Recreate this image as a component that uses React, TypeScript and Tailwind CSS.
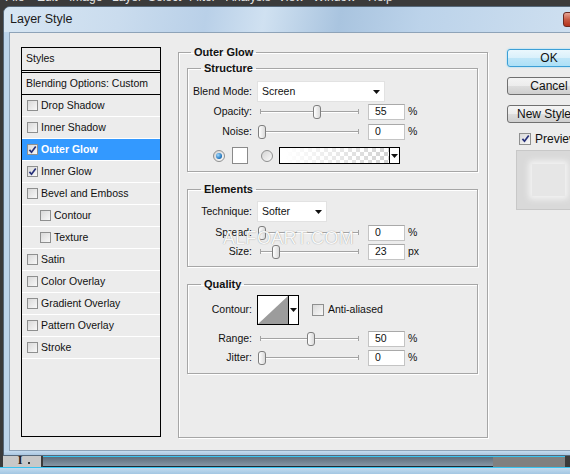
import React from "react";

function Box({ on, big }: { on?: boolean; big?: boolean }) {
  return (
    <span
      className={`flex shrink-0 items-center justify-center border border-[#8e8f8f] bg-[linear-gradient(135deg,#d9d9d9,#f8f8f8)] ${
        big ? "h-[12px] w-[12px]" : "h-[11px] w-[11px]"
      }`}
    >
      {on && (
        <svg viewBox="0 0 10 10" className="h-[9px] w-[9px]">
          <path d="M1.6 5.4 L3.9 8 L8.6 1.6" fill="none" stroke="#26307a" strokeWidth="1.9" />
        </svg>
      )}
    </span>
  );
}

function Radio({ on }: { on?: boolean }) {
  return (
    <span className="flex h-[12px] w-[12px] shrink-0 items-center justify-center rounded-full border border-[#8e8f8f] bg-[linear-gradient(135deg,#d4d4d4,#fafafa)]">
      {on && (
        <span className="h-[6px] w-[6px] rounded-full bg-[radial-gradient(circle_at_35%_35%,#9fd9ff,#1b6fb8_70%,#0d3f73)]" />
      )}
    </span>
  );
}

function LayerRow({ label, on, sel, indent }: { label: string; on?: boolean; sel?: boolean; indent?: boolean }) {
  return (
    <div
      className={`flex h-[22px] shrink-0 items-center border-b border-white ${
        sel ? "bg-[#3399ff] font-bold text-white" : ""
      } ${indent ? "pl-[18px]" : "pl-[5px]"}`}
    >
      <Box on={on} />
      <span className="ml-[3px]">{label}</span>
    </div>
  );
}

function Label({ children }: { children: React.ReactNode }) {
  return <span className="w-[64px] shrink-0 text-right">{children}</span>;
}

function Slider({ pos }: { pos: number }) {
  return (
    <div className="relative ml-[5px] h-[16px] w-[104px] shrink-0">
      <div className="absolute left-[4px] right-[2px] top-[7px] h-[2px] border-t border-b border-t-[#a3a3a3] border-b-white" />
      <div className="absolute left-[3px] top-[5px] h-[5px] w-[1px] bg-[#a3a3a3]" />
      <div className="absolute right-[2px] top-[5px] h-[5px] w-[1px] bg-[#a3a3a3]" />
      <div
        className="absolute top-[1px] h-[14px] w-[8px] rounded-[3px] border border-[#7f7f7f] bg-[linear-gradient(90deg,#ffffff,#dadada)]"
        style={{ left: pos }}
      />
    </div>
  );
}

function SliderRow({ label, pos, value, unit }: { label: string; pos: number; value: string; unit: string }) {
  return (
    <div className="flex h-[16px] items-center">
      <Label>{label}</Label>
      <Slider pos={pos} />
      <div className="ml-[7px] flex h-[16px] w-[37px] items-center border border-[#c4c4c4] border-t-[#a9a9a9] bg-white pl-[6px]">
        {value}
      </div>
      <span className="ml-[3px]">{unit}</span>
    </div>
  );
}

function Arrow() {
  return (
    <svg viewBox="0 0 7 4" className="h-[4px] w-[7px]">
      <path d="M0 0 H7 L3.5 4 Z" fill="#111" />
    </svg>
  );
}

function Select({ value, w }: { value: string; w: string }) {
  return (
    <div className={`ml-[5px] flex h-[21px] items-center justify-between border border-[#e2e2e2] bg-white pl-[4px] pr-[4px] ${w}`}>
      <span>{value}</span>
      <Arrow />
    </div>
  );
}

function Group({ title, children, className }: { title: string; children: React.ReactNode; className?: string }) {
  return (
    <fieldset
      className={`relative flex flex-col border border-[#a6a6a6] shadow-[inset_1px_1px_0_#ffffff,1px_1px_0_#ffffff] ${className ?? ""}`}
    >
      <legend className="ml-[13px] px-[3px] text-[11px] font-bold leading-[14px]">{title}</legend>
      {children}
    </fieldset>
  );
}

function Btn({ children, def }: { children: React.ReactNode; def?: boolean }) {
  return (
    <div
      className={`flex h-[18px] w-[84px] shrink-0 items-center justify-center rounded-[3px] border text-[12px] ${
        def
          ? "border-[#3c9fd6] bg-[linear-gradient(#eaf7fd_0%,#d9f0fb_50%,#bfe6f8_51%,#ace0f7_100%)] shadow-[0_0_2px_#7fd5fa]"
          : "border-[#707070] bg-[linear-gradient(#f4f4f4_0%,#ececec_50%,#dddddd_51%,#cfcfcf_100%)]"
      }`}
    >
      {children}
    </div>
  );
}

const menu: [string, string][] = [
  ["File", "w-[32px]"],
  ["Edit", "w-[32px]"],
  ["Image", "w-[43px]"],
  ["Layer", "w-[36px]"],
  ["Select", "w-[41px]"],
  ["Filter", "w-[37px]"],
  ["Analysis", "w-[52px]"],
  ["View", "w-[35px]"],
  ["Window", "w-[55px]"],
  ["Help", "w-[40px]"],
];

export default function App() {
  return (
    <div className="flex h-[474px] w-[570px] flex-col overflow-hidden bg-[#3b3b3b] font-['Liberation_Sans',Arial,sans-serif] text-[10.5px] text-[#111]">
      <div className="flex h-[6px] shrink-0 overflow-hidden pl-[5px]">
        {menu.map(([m, w]) => (
          <span key={m} className={`-mt-[9px] shrink-0 overflow-hidden text-[12px] leading-[12px] text-[#e6e6e6] ${w}`}>
            {m}
          </span>
        ))}
      </div>

      <div className="ml-[3px] flex h-[450px] w-[580px] shrink-0 flex-col rounded-t-[7px] border border-[#56687a] bg-[#bdd5eb]">
        <div className="flex h-[25px] shrink-0 items-center rounded-t-[6px] bg-[linear-gradient(100deg,#d7e6f3_0%,#cadcee_20%,#b9d0e8_35%,#d0e1f1_45%,#a9c4df_58%,#bcd3ea_72%,#cfe0f0_100%)] pl-[6px]">
          <span className="text-[12.5px] text-[#1b1b1b]">Layer Style</span>
          <div className="ml-auto mr-[5px] h-[15px] w-[14px] rounded-[3px] border border-[#6b2a22] bg-[linear-gradient(#e7a595,#c85a43_50%,#b3331c)]" />
        </div>

        <div className="ml-[5px] flex h-[419px] shrink-0 items-start border border-[#8ea3b8] bg-[#ececec] pl-[11px]">
          <div className="mt-[14px] flex h-[390px] w-[140px] shrink-0 flex-col border border-black">
            <div className="flex h-[23px] shrink-0 items-center border-b border-black pl-[4px]">Styles</div>
            <div className="mt-[1px] flex h-[23px] shrink-0 items-center border-t border-b border-black pl-[4px]">
              Blending Options: Custom
            </div>
            <LayerRow label="Drop Shadow" />
            <LayerRow label="Inner Shadow" />
            <LayerRow label="Outer Glow" on sel />
            <LayerRow label="Inner Glow" on />
            <LayerRow label="Bevel and Emboss" />
            <LayerRow label="Contour" indent />
            <LayerRow label="Texture" indent />
            <LayerRow label="Satin" />
            <LayerRow label="Color Overlay" />
            <LayerRow label="Gradient Overlay" />
            <LayerRow label="Pattern Overlay" />
            <LayerRow label="Stroke" />
          </div>

          <div className="ml-[17px] mt-[12px] shrink-0">
            <fieldset className="flex h-[393px] w-[310px] flex-col border border-[#a6a6a6] shadow-[inset_1px_1px_0_#ffffff,1px_1px_0_#ffffff]">
              <legend className="ml-[12px] px-[3px] text-[11px] font-bold leading-[14px]">Outer Glow</legend>

              <Group title="Structure" className="ml-[8px] mt-[2px] w-[291px] pb-[7px]">
                <div className="mt-[6px] flex h-[21px] items-center">
                  <Label>Blend Mode:</Label>
                  <Select value="Screen" w="w-[128px]" />
                </div>
                <div className="mt-[2px]">
                  <SliderRow label="Opacity:" pos={56} value="55" unit="%" />
                </div>
                <div className="mt-[4px]">
                  <SliderRow label="Noise:" pos={1} value="0" unit="%" />
                </div>
                <div className="mt-[7px] flex h-[17px] items-center">
                  <span className="ml-[25px]">
                    <Radio on />
                  </span>
                  <div className="ml-[7px] h-[17px] w-[16px] border border-[#8a8a8a] bg-white" />
                  <span className="ml-[13px]">
                    <Radio />
                  </span>
                  <div className="ml-[6px] flex h-[17px] w-[121px] border border-black">
                    <div className="flex-1 bg-[linear-gradient(to_right,#ffffff_5%,rgba(255,255,255,0)),repeating-conic-gradient(#d2d2d2_0_25%,#ffffff_0_50%)] bg-[length:100%_100%,8px_8px]" />
                    <div className="flex w-[10px] items-center justify-center border-l border-black bg-white">
                      <Arrow />
                    </div>
                  </div>
                </div>
              </Group>

              <Group title="Elements" className="ml-[8px] mt-[10px] w-[291px] pb-[6px]">
                <div className="mt-[5px] flex h-[21px] items-center">
                  <Label>Technique:</Label>
                  <Select value="Softer" w="w-[70px]" />
                </div>
                <div className="mt-[3px]">
                  <SliderRow label="Spread:" pos={1} value="0" unit="%" />
                </div>
                <div className="mt-[3px]">
                  <SliderRow label="Size:" pos={15} value="23" unit="px" />
                </div>
                <span className="pointer-events-none absolute left-[35px] top-[33px] text-[18px] leading-[18px] tracking-[0.3px] text-[#f7f7f7] [text-shadow:0_0_1px_#8c8c8c]">
                  ALFOART.COM
                </span>
              </Group>

              <Group title="Quality" className="ml-[8px] mt-[10px] w-[291px] pb-[7px]">
                <div className="mt-[4px] flex h-[30px] items-center">
                  <Label>Contour:</Label>
                  <div className="ml-[5px] flex h-[30px] w-[42px] border border-black bg-white">
                    <svg viewBox="0 0 30 28" className="h-[28px] w-[30px]" preserveAspectRatio="none">
                      <path d="M0 28 L30 0 L30 28 Z" fill="#9c9c9c" />
                    </svg>
                    <div className="flex flex-1 items-center justify-center border-l border-black">
                      <Arrow />
                    </div>
                  </div>
                  <span className="ml-[13px]">
                    <Box big />
                  </span>
                  <span className="ml-[4px]">Anti-aliased</span>
                </div>
                <div className="mt-[6px]">
                  <SliderRow label="Range:" pos={50} value="50" unit="%" />
                </div>
                <div className="mt-[3px]">
                  <SliderRow label="Jitter:" pos={1} value="0" unit="%" />
                </div>
              </Group>
            </fieldset>
          </div>

          <div className="ml-[19px] mt-[16px] flex shrink-0 flex-col">
            <Btn def>OK</Btn>
            <div className="mt-[10px]">
              <Btn>Cancel</Btn>
            </div>
            <div className="mt-[10px]">
              <Btn>New Style...</Btn>
            </div>
            <div className="ml-[12px] mt-[9px] flex h-[13px] items-center">
              <Box on big />
              <span className="ml-[4px] text-[12px]">Preview</span>
            </div>
            <div className="ml-[9px] mt-[5px] flex h-[60px] w-[62px] items-center border border-[#c8c8c8] bg-[#d9d9d9] pl-[15px]">
              <div className="h-[32px] w-[33px] bg-[#e6e6e6] shadow-[0_0_6px_3px_#f4f4f4]" />
            </div>
          </div>
        </div>

        <div className="h-[4px] shrink-0 bg-[linear-gradient(#c6dcef,#a9c6e0)]" />
      </div>

      <div className="flex h-[11px] shrink-0">
        <div className="ml-[3px] flex w-[38px] items-start justify-center bg-[#c8c8c8] pl-[4px]">
          <span className="-mt-[2px] font-['Liberation_Serif',serif] text-[12px] font-bold leading-[12px] text-[#222]">I</span>
          <span className="ml-[6px] mt-[6px] h-[2px] w-[2px] bg-[#333]" />
        </div>
        <div className="ml-[2px] w-[450px] border-t border-t-[#39c3f0] border-b border-b-[#1f2a33] bg-[linear-gradient(#5e6d7b,#8696a5)]" />
        <div className="w-[72px] border-t border-t-[#39c3f0] bg-[#808080]" />
      </div>
      <div className="h-[7px] shrink-0 border-t border-t-[#39c3f0] bg-[linear-gradient(#c2dbef,#a3c6e2)]" />
    </div>
  );
}
